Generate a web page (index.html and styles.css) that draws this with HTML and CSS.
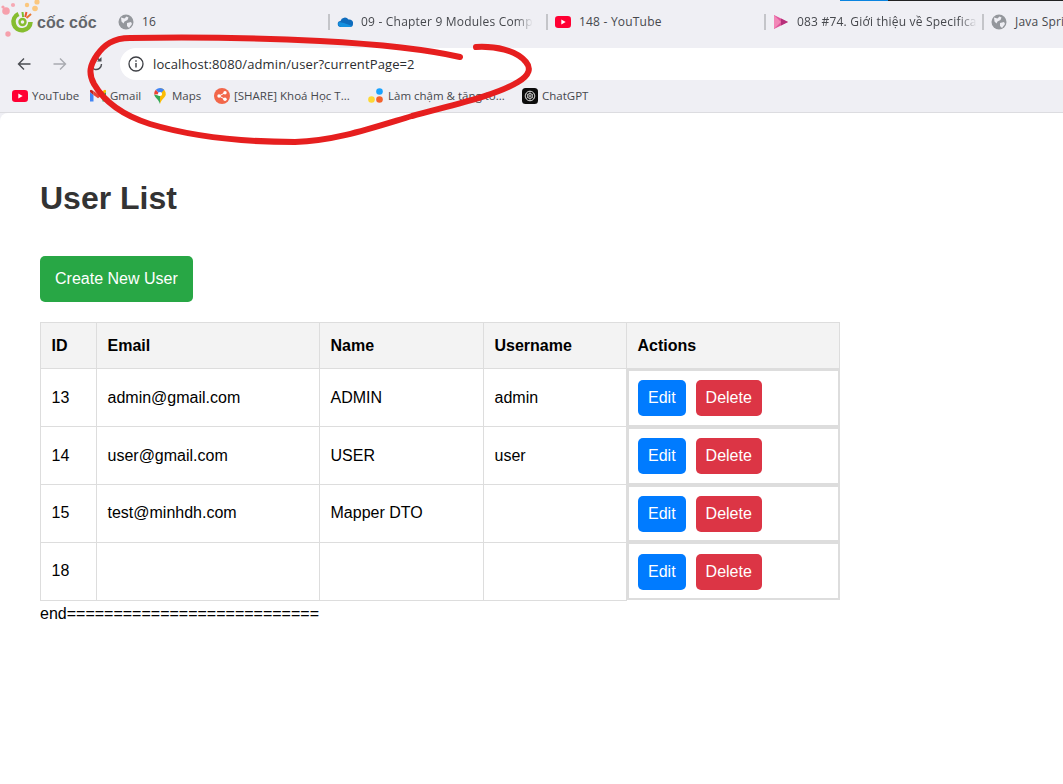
FILE: index.html
```html
<!DOCTYPE html>
<html lang="vi">
<head>
<meta charset="utf-8">
<title>User List</title>
<link rel="stylesheet" href="styles.css">
</head>
<body>
<div class="browser">
  <div class="top-accent"><span class="accent-blue"></span><span class="accent-dark"></span></div>
  <div class="tabs">
    <div class="brand">
      <span class="brand-name">cốc cốc</span>
    </div>
    <div class="tab tab-first">
      <svg class="ico" viewBox="0 0 16 16"><circle cx="8" cy="8" r="7.500" fill="#94979c"/><path d="M3 3.500l3.500 1 2-2 2 1-1 2.500-3 1.500-1 2-2-2zM9 9l4-1 1 2-3 4-2-2z" fill="#eeeef3"/></svg>
      <span class="tab-title">16</span>
    </div>
    <div class="tab">
      <svg class="ico" viewBox="0 0 16 16"><path d="M4 13a3 3 0 0 1-.5-6 4.500 4.500 0 0 1 8-1.500A3.800 3.800 0 0 1 16 10a3 3 0 0 1-3 3z" fill="#0f6cbd"/><path d="M4 13a3 3 0 0 1-2-5l5 1 8 3-2 1z" fill="#1490df"/></svg>
      <span class="tab-title tab-fade">09 - Chapter 9 Modules Comp</span>
    </div>
    <div class="tab">
      <svg class="ico" viewBox="0 0 16 16"><rect y="2" width="16" height="12" rx="3.200" fill="#ff0033"/><path d="M6.300 5.500l4.400 2.500-4.400 2.500z" fill="#fff"/></svg>
      <span class="tab-title">148 - YouTube</span>
    </div>
    <div class="tab">
      <svg class="ico" viewBox="0 0 16 16"><path d="M1 1l14 7-14 7z" fill="#e0559b"/><path d="M1 1l7 7-7 7z" fill="#f287b7"/><path d="M8 4.500L15 8l-7 3.500z" fill="#b5307a"/></svg>
      <span class="tab-title tab-fade">083 #74. Giới thiệu về Specifica</span>
    </div>
    <div class="tab tab-last">
      <svg class="ico" viewBox="0 0 16 16"><circle cx="8" cy="8" r="7.500" fill="#94979c"/><path d="M3 3.500l3.500 1 2-2 2 1-1 2.500-3 1.500-1 2-2-2zM9 9l4-1 1 2-3 4-2-2z" fill="#eeeef3"/></svg>
      <span class="tab-title">Java Spri</span>
    </div>
  </div>
  <div class="toolbar">
    <div class="nav">
      <svg class="nav-ico" viewBox="0 0 16 16"><path d="M14.500 8H2.500M8 2.500L2.500 8 8 13.500" fill="none" stroke="#4b4d52" stroke-width="1.400"/></svg>
      <svg class="nav-ico" viewBox="0 0 16 16"><path d="M1.500 8h12M8 2.500L13.500 8 8 13.500" fill="none" stroke="#a9abb0" stroke-width="1.400"/></svg>
      <svg class="nav-ico" viewBox="0 0 16 16"><path d="M13.500 8A5.500 5.500 0 1 1 11.500 3.800" fill="none" stroke="#4b4d52" stroke-width="1.400"/><path d="M13.500 1v4.500H9z" fill="#4b4d52"/></svg>
    </div>
    <div class="address">
      <svg class="info" viewBox="0 0 16 16"><circle cx="8" cy="8" r="7" fill="none" stroke="#3c3e43" stroke-width="1.300"/><path d="M8 7v4.500M8 4.300v1.400" stroke="#3c3e43" stroke-width="1.400"/></svg>
      <span class="url">localhost:8080/admin/user?currentPage=2</span>
    </div>
  </div>
  <div class="bookmarks">
    <div class="bm bm-yt">
      <svg class="ico" viewBox="0 0 16 16"><rect y="2" width="16" height="12" rx="3.200" fill="#ff0033"/><path d="M6.300 5.500l4.400 2.500-4.400 2.500z" fill="#fff"/></svg>
      <span>YouTube</span>
    </div>
    <div class="bm bm-gm">
      <svg class="ico" viewBox="0 0 16 16"><path d="M0 4v9.500h3.500V7z" fill="#4285f4"/><path d="M16 4v9.500h-3.500V7z" fill="#34a853"/><path d="M3.500 7L8 10.300 12.500 7V3L8 6.300 3.500 3z" fill="#ea4335"/><path d="M0 4l3.500 3V3L2 2.300A1.300 1.300 0 0 0 0 4z" fill="#c5221f"/><path d="M16 4l-3.500 3V3L14 2.300A1.300 1.300 0 0 1 16 4z" fill="#fbbc04"/></svg>
      <span>Gmail</span>
    </div>
    <div class="bm bm-maps">
      <svg class="ico" viewBox="0 0 16 16"><path d="M8 0a6 6 0 0 1 5.800 6.500C13.500 9.500 9.500 11 8 16z" fill="#fbbc04"/><path d="M8 16C6.500 11 2.500 9.500 2.200 6.500L8 8z" fill="#34a853"/><path d="M2.200 6.500A6 6 0 0 1 3.800 1.800L8 6z" fill="#ea4335"/><path d="M3.800 1.800A6 6 0 0 1 12.200 1.800L8 6z" fill="#4285f4"/><circle cx="8" cy="6" r="2.100" fill="#fff"/></svg>
      <span>Maps</span>
    </div>
    <div class="bm bm-share">
      <svg class="ico" viewBox="0 0 16 16"><circle cx="8" cy="8" r="8" fill="#f2674a"/><circle cx="5" cy="8" r="1.700" fill="#fff"/><circle cx="11" cy="4.800" r="1.700" fill="#fff"/><circle cx="11" cy="11.200" r="1.700" fill="#fff"/><path d="M5 8l6-3.200M5 8l6 3.200" stroke="#fff" stroke-width="1"/></svg>
      <span>[SHARE] Khoá Học T...</span>
    </div>
    <div class="bm bm-dots">
      <svg class="ico" viewBox="0 0 16 16"><circle cx="11.500" cy="3.500" r="3.300" fill="#1aa3ff"/><circle cx="3.500" cy="11.500" r="3.300" fill="#fdd835"/><circle cx="11.500" cy="11.500" r="3.300" fill="#f4622d"/></svg>
      <span>Làm chậm &amp; tăng tố...</span>
    </div>
    <div class="bm">
      <svg class="ico" viewBox="0 0 16 16"><rect width="16" height="16" rx="3.500" fill="#0c0c0c"/><circle cx="8" cy="8" r="4.800" fill="none" stroke="#d8d8d8" stroke-width="1"/><circle cx="8" cy="8" r="2.600" fill="none" stroke="#d8d8d8" stroke-width=".8"/><path d="M4 5.500l8 5M4 10.500l8-5M8 3v10" stroke="#d8d8d8" stroke-width=".6"/></svg>
      <span>ChatGPT</span>
    </div>
  </div>
  <main class="page">
    <h1 class="heading">User List</h1>
    <a class="btn btn-create">Create New User</a>
    <table class="users">
      <colgroup>
        <col class="col-id"><col class="col-email"><col class="col-name"><col class="col-user"><col class="col-actions">
      </colgroup>
      <thead>
        <tr><th>ID</th><th>Email</th><th>Name</th><th>Username</th><th>Actions</th></tr>
      </thead>
      <tbody>
        <tr><td>13</td><td>admin@gmail.com</td><td>ADMIN</td><td>admin</td><td class="actions"><a class="btn btn-edit">Edit</a><a class="btn btn-delete">Delete</a></td></tr>
        <tr><td>14</td><td>user@gmail.com</td><td>USER</td><td>user</td><td class="actions"><a class="btn btn-edit">Edit</a><a class="btn btn-delete">Delete</a></td></tr>
        <tr><td>15</td><td>test@minhdh.com</td><td>Mapper DTO</td><td></td><td class="actions"><a class="btn btn-edit">Edit</a><a class="btn btn-delete">Delete</a></td></tr>
        <tr><td>18</td><td></td><td></td><td></td><td class="actions"><a class="btn btn-edit">Edit</a><a class="btn btn-delete">Delete</a></td></tr>
      </tbody>
    </table>
    <div class="end">end===========================</div>
  </main>
  <svg class="logo-art" viewBox="0 0 42 42" width="42" height="42">
    <circle cx="6" cy="11" r="3.800" fill="#f6a0ac"/><circle cx="3" cy="7" r="1.600" fill="#f6a0ac"/><circle cx="13" cy="5" r="2.100" fill="#f6a9b4"/>
    <circle cx="27" cy="5" r="2.200" fill="#fbc77e"/><circle cx="35" cy="8.500" r="2.800" fill="#fbc77e"/><circle cx="37" cy="2" r="2.600" fill="#fbc77e"/>
    <circle cx="8" cy="34" r="2.700" fill="#f6a0ac"/>
    <path d="M18.500 14a8.500 8.500 0 1 0 12 8" fill="none" stroke="#86bd2f" stroke-width="4.600"/>
    <circle cx="22.500" cy="22" r="3" fill="none" stroke="#86bd2f" stroke-width="2.400"/>
    <path d="M22.500 12l.6 5" stroke="#7dbb2c" stroke-width="2"/><path d="M26.500 12l-1.300 5" stroke="#e8562f" stroke-width="2"/><path d="M31 14l-4.500 4" stroke="#e8762f" stroke-width="2"/>
  </svg>
  <svg class="scribble" viewBox="0 0 1063 784" width="1063" height="784">
    <path d="M460 57C425 49 375 44 320 41C260 38 180 37 130 38C113 38 104 45 97 55C90 65 88 73 94 84C105 103 125 116 150 124C190 136 240 142 295 142C335 141 372 128 412 116C452 105 495 96 518 82C530 75 531 68 526 62C516 50 495 46 476 47" fill="none" stroke="#e61f1f" stroke-width="6" stroke-linecap="round" stroke-linejoin="round"/>
  </svg>
</div>
</body>
</html>
```
FILE: styles.css
```css
* { box-sizing: border-box; }
html, body { margin: 0; padding: 0; background: #fff; }
.browser {
  position: relative;
  width: 1063px;
  height: 784px;
  overflow: hidden;
  background: #efeff4;
  display: flex;
  flex-direction: column;
  font-family: "Open Sans", "Noto Sans", sans-serif;
  font-size: 12px;
  color: #46484d;
}
.top-accent { height: 1px; display: flex; justify-content: flex-end; flex: none; }
.accent-blue { width: 48px; background: #0a84e0; }
.accent-dark { width: 175px; background: #222; }
.tabs { height: 47px; flex: none; display: flex; align-items: center; padding-bottom: 6px; overflow: hidden; }
.brand { width: 110px; flex: none; padding-left: 37px; }
.brand-name {
  display: block;
  font-family: "Liberation Sans", sans-serif;
  font-weight: 700;
  font-size: 16px;
  line-height: 16px;
  color: #63666a;
  margin-top: 3px;
  white-space: nowrap;
}
.tab {
  width: 218px;
  flex: none;
  display: flex;
  align-items: center;
  gap: 8px;
  height: 16px;
  padding-left: 7px;
  border-left: 2px solid #c4c5c9;
  white-space: nowrap;
}
.tab-first { border-left: 0; padding-left: 8px; }
.tab-last { width: 81px; }
.tab-title { letter-spacing: .2px; }
.tab-fade {
  -webkit-mask-image: linear-gradient(to right, #000 90%, transparent);
  mask-image: linear-gradient(to right, #000 90%, transparent);
}
.ico { width: 16px; height: 16px; flex: none; display: block; }
.toolbar { height: 32px; flex: none; display: flex; align-items: center; }
.nav { width: 120px; flex: none; display: flex; gap: 20px; padding-left: 16px; }
.nav-ico { width: 16px; height: 16px; display: block; }
.address {
  flex: 1;
  height: 32px;
  background: #fff;
  border-radius: 16px 0 0 16px;
  display: flex;
  align-items: center;
  padding-left: 8px;
  gap: 9px;
}
.info { width: 16px; height: 16px; flex: none; }
.url { font-size: 13px; color: #2b2d30; letter-spacing: .12px; }
.bookmarks {
  height: 33px;
  flex: none;
  display: flex;
  align-items: center;
  padding: 0 0 1px 12px;
  border-bottom: 1px solid #dcdce0;
  font-size: 11.500px;
}
.bm { display: flex; align-items: center; gap: 4px; white-space: nowrap; }
.bm-yt { width: 78px; }
.bm-gm { width: 62px; }
.bm-maps { width: 62px; }
.bm-share { width: 154px; }
.bm-dots { width: 154px; }
.page {
  flex: 1;
  background: #fff;
  border-radius: 8px 0 0 0;
  padding: 46px 40px 0;
  font-family: "Liberation Sans", Arial, sans-serif;
  font-size: 16px;
  color: #000;
}
.heading { margin: 21px 0 39px; font-size: 32px; font-weight: 700; color: #333; line-height: 37px; }
.btn {
  display: block;
  color: #fff;
  border-radius: 5px;
  line-height: 18px;
  width: fit-content;
}
.btn-create { background: #28a745; padding: 14px 15px; margin-bottom: 20px; }
.btn-edit { background: #007bff; padding: 9px 10px; }
.btn-delete { background: #dc3545; padding: 9px 10px; }
.users { border-collapse: collapse; table-layout: fixed; width: 800px; }
.col-id { width: 56px; }
.col-email { width: 223px; }
.col-name { width: 164px; }
.col-user { width: 143px; }
.col-actions { width: 213px; }
.users th, .users td { border: 1px solid #ddd; text-align: left; padding: 9.375px 10px 9.375px 10.500px; }
.users th { background: #f3f3f3; font-weight: 700; padding: 13.500px 10px 13.500px 10.500px; line-height: 18px; }
.users td.actions { display: flex; gap: 10px; border-width: 2px; padding: 9.375px 10px 8.375px 9px; }
.end { line-height: 18px; margin-top: 4px; }
.logo-art { position: absolute; left: 0; top: 0; }
.scribble { position: absolute; left: 0; top: 0; pointer-events: none; }
```
